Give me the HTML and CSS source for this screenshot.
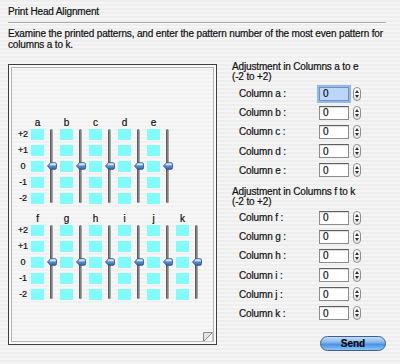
FILE: index.html
```html
<!DOCTYPE html>
<html lang="en">
<head>
    <meta charset="UTF-8">
    <title>Print Head Alignment</title>
    <link rel="stylesheet" href="styles.css">
</head>
<body>

<svg width="0" height="0" class="defs">
    <defs>
        <linearGradient id="thumb-fill" x1="0" y1="0" x2="0" y2="1">
            <stop offset="0" stop-color="#cfe3fb"/>
            <stop offset="0.45" stop-color="#5d93dc"/>
            <stop offset="1" stop-color="#2f64b8"/>
        </linearGradient>
        <symbol id="thumb" viewBox="0 0 10 8">
            <path d="M0.5 4 L3.5 0.7 H8 Q9.5 0.7 9.5 2.3 V5.7 Q9.5 7.3 8 7.3 H3.5 Z" fill="url(#thumb-fill)" stroke="#284c86" stroke-width="0.8"/>
            <path d="M3.8 1.6 H8 Q8.7 1.6 8.7 2.6 V3.2 H2.6 Z" fill="#eaf3ff" opacity="0.8"/>
        </symbol>
    </defs>
</svg>

<div class="dialog">
    <div class="title">Print Head Alignment</div>
    <div class="rule"></div>
    <p class="intro">Examine the printed patterns, and enter the pattern number of the most even pattern for<br>columns a to k.</p>

    <div class="main">
        <div class="sheet">
            <div class="group">
                <div class="levels">
                    <span>+2</span><span>+1</span><span>0</span><span>-1</span><span>-2</span>
                </div>
                <div class="col">
                    <div class="cells"><div class="letter">a</div><span class="sq"></span><span class="sq"></span><span class="sq"></span><span class="sq"></span><span class="sq"></span></div>
                    <div class="slider"><svg class="thumb"><use href="#thumb"/></svg></div>
                </div>
                <div class="col">
                    <div class="cells"><div class="letter">b</div><span class="sq"></span><span class="sq"></span><span class="sq"></span><span class="sq"></span><span class="sq"></span></div>
                    <div class="slider"><svg class="thumb"><use href="#thumb"/></svg></div>
                </div>
                <div class="col">
                    <div class="cells"><div class="letter">c</div><span class="sq"></span><span class="sq"></span><span class="sq"></span><span class="sq"></span><span class="sq"></span></div>
                    <div class="slider"><svg class="thumb"><use href="#thumb"/></svg></div>
                </div>
                <div class="col">
                    <div class="cells"><div class="letter">d</div><span class="sq"></span><span class="sq"></span><span class="sq"></span><span class="sq"></span><span class="sq"></span></div>
                    <div class="slider"><svg class="thumb"><use href="#thumb"/></svg></div>
                </div>
                <div class="col">
                    <div class="cells"><div class="letter">e</div><span class="sq"></span><span class="sq"></span><span class="sq"></span><span class="sq"></span><span class="sq"></span></div>
                    <div class="slider"><svg class="thumb"><use href="#thumb"/></svg></div>
                </div>
            </div>

            <div class="group">
                <div class="levels">
                    <span>+2</span><span>+1</span><span>0</span><span>-1</span><span>-2</span>
                </div>
                <div class="col">
                    <div class="cells"><div class="letter">f</div><span class="sq"></span><span class="sq"></span><span class="sq"></span><span class="sq"></span><span class="sq"></span></div>
                    <div class="slider"><svg class="thumb"><use href="#thumb"/></svg></div>
                </div>
                <div class="col">
                    <div class="cells"><div class="letter">g</div><span class="sq"></span><span class="sq"></span><span class="sq"></span><span class="sq"></span><span class="sq"></span></div>
                    <div class="slider"><svg class="thumb"><use href="#thumb"/></svg></div>
                </div>
                <div class="col">
                    <div class="cells"><div class="letter">h</div><span class="sq"></span><span class="sq"></span><span class="sq"></span><span class="sq"></span><span class="sq"></span></div>
                    <div class="slider"><svg class="thumb"><use href="#thumb"/></svg></div>
                </div>
                <div class="col">
                    <div class="cells"><div class="letter">i</div><span class="sq"></span><span class="sq"></span><span class="sq"></span><span class="sq"></span><span class="sq"></span></div>
                    <div class="slider"><svg class="thumb"><use href="#thumb"/></svg></div>
                </div>
                <div class="col">
                    <div class="cells"><div class="letter">j</div><span class="sq"></span><span class="sq"></span><span class="sq"></span><span class="sq"></span><span class="sq"></span></div>
                    <div class="slider"><svg class="thumb"><use href="#thumb"/></svg></div>
                </div>
                <div class="col">
                    <div class="cells"><div class="letter">k</div><span class="sq"></span><span class="sq"></span><span class="sq"></span><span class="sq"></span><span class="sq"></span></div>
                    <div class="slider"><svg class="thumb"><use href="#thumb"/></svg></div>
                </div>
            </div>

            <svg class="curl" width="10" height="10" viewBox="0 0 10 10">
                <path d="M0.5 0.5 H9.5 L0.5 9.5 Z" fill="#e4e4e4" stroke="#8a8a8a" stroke-width="1"/>
                <path d="M9.5 0.5 V9.5 H0.5" fill="none" stroke="#c8c8c8" stroke-width="1"/>
            </svg>
        </div>

        <div class="panel">
            <div class="heading">Adjustment in Columns a to e<br>(-2 to +2)</div>
            <div class="rows">
                <div class="row"><label for="col-a">Column a :</label><input id="col-a" class="field focus" value="0"><span class="stepper"></span></div>
                <div class="row"><label for="col-b">Column b :</label><input id="col-b" class="field" value="0"><span class="stepper"></span></div>
                <div class="row"><label for="col-c">Column c :</label><input id="col-c" class="field" value="0"><span class="stepper"></span></div>
                <div class="row"><label for="col-d">Column d :</label><input id="col-d" class="field" value="0"><span class="stepper"></span></div>
                <div class="row"><label for="col-e">Column e :</label><input id="col-e" class="field" value="0"><span class="stepper"></span></div>
            </div>

            <div class="heading second">Adjustment in Columns f to k<br>(-2 to +2)</div>
            <div class="rows">
                <div class="row"><label for="col-f">Column f :</label><input id="col-f" class="field" value="0"><span class="stepper"></span></div>
                <div class="row"><label for="col-g">Column g :</label><input id="col-g" class="field" value="0"><span class="stepper"></span></div>
                <div class="row"><label for="col-h">Column h :</label><input id="col-h" class="field" value="0"><span class="stepper"></span></div>
                <div class="row"><label for="col-i">Column i :</label><input id="col-i" class="field" value="0"><span class="stepper"></span></div>
                <div class="row"><label for="col-j">Column j :</label><input id="col-j" class="field" value="0"><span class="stepper"></span></div>
                <div class="row"><label for="col-k">Column k :</label><input id="col-k" class="field" value="0"><span class="stepper"></span></div>
            </div>

            <button class="send">Send</button>
        </div>
    </div>
</div>

</body>
</html>
```

FILE: styles.css
```css
html, body {
    margin: 0;
    height: 100%;
}
body {
    background: repeating-linear-gradient(#eeeeee 0 2px, #f5f5f5 2px 4px);
    font-family: "Liberation Sans", Arial, sans-serif;
    font-size: 10px;
    line-height: 11px;
    letter-spacing: -0.15px;
    color: #111;
    -webkit-text-stroke: 0.2px #111;
}
.defs {
    position: absolute;
}
.dialog {
    padding: 6px 14px 0 8px;
}
.title {
    height: 11px;
}
.rule {
    margin-top: 5px;
    height: 0;
    border-top: 1px solid #a9a9a9;
    border-bottom: 1px solid #fbfbfb;
}
.intro {
    margin: 4px 0 0;
    white-space: nowrap;
}
.main {
    display: flex;
    margin-top: 12px;
}

/* pattern sheet */
.sheet {
    position: relative;
    box-sizing: border-box;
    width: 209px;
    height: 281px;
    margin-top: 2px;
    padding: 55px 0 0 6px;
    border: 1px solid #3e3e3e;
    box-shadow: inset 0 0 0 2px #fafafa, inset 0 0 0 3px #b4b4b4;
    background: repeating-linear-gradient(#f1f1f1 0 2px, #f7f7f7 2px 4px);
}
.group {
    display: flex;
}
.group + .group {
    margin-top: 10px;
}
.levels {
    display: flex;
    flex-direction: column;
    width: 16px;
    padding-top: 6px;
    font-size: 9px;
}
.levels span {
    height: 16px;
    line-height: 16px;
    text-align: center;
}
.col {
    display: flex;
}
.cells {
    display: flex;
    flex-direction: column;
    gap: 5px;
    width: 13px;
}
.letter {
    height: 6px;
    margin-bottom: -2.5px;
    line-height: 6px;
    text-align: center;
}
.sq {
    display: block;
    width: 13px;
    height: 11px;
    background: #80fcfc;
}
.slider {
    position: relative;
    width: 16px;
    height: 74px;
    margin-top: 9px;
}
.slider::before {
    content: "";
    position: absolute;
    left: 6px;
    top: 0;
    bottom: 0;
    width: 3px;
    border-radius: 2px;
    background: linear-gradient(to right, #4e4e4e, #8a8a8a 60%, #b9b9b9);
}
.thumb {
    position: absolute;
    left: 3px;
    top: 33px;
    width: 10px;
    height: 8px;
}
.curl {
    position: absolute;
    right: 3px;
    bottom: 2px;
}

/* adjustment fields */
.panel {
    margin-left: 15px;
    width: 154px;
}
.heading {
    line-height: 10px;
}
.heading.second {
    margin-top: 7px;
}
.rows {
    margin-top: 2px;
}
.heading.second + .rows {
    margin-top: 1px;
}
.row {
    display: flex;
    align-items: center;
    height: 19.2px;
}
.row label {
    width: 87px;
    padding-left: 7px;
    box-sizing: border-box;
}
.field {
    box-sizing: border-box;
    width: 30px;
    height: 14px;
    margin: 0;
    padding: 0 3px;
    border: 1px solid #8c8c8c;
    border-top-color: #5f5f5f;
    box-shadow: inset 0 1px 1px rgba(0, 0, 0, 0.15);
    background: #fff;
    font: 10px "Liberation Sans", Arial, sans-serif;
    color: #111;
    outline: none;
}
.field.focus {
    background: #bdd6f6;
    border-color: #6d93cc;
    box-shadow: 0 0 0 2px #93b8ea;
}
.stepper {
    position: relative;
    box-sizing: border-box;
    width: 8px;
    height: 14px;
    margin-left: 4px;
    border: 1px solid #8e8e8e;
    border-radius: 4px;
    background: linear-gradient(#ffffff, #e6e6e6);
}
.stepper::before, .stepper::after {
    content: "";
    position: absolute;
    left: 1px;
    border-left: 2px solid transparent;
    border-right: 2px solid transparent;
}
.stepper::before {
    top: 2px;
    border-bottom: 3px solid #333;
}
.stepper::after {
    bottom: 2px;
    border-top: 3px solid #333;
}
.send {
    display: block;
    width: 66px;
    height: 15px;
    margin: 13px 0 0 88px;
    padding: 0;
    border: 1px solid #3d5f97;
    border-radius: 8px;
    background: linear-gradient(#c4ddf7 0%, #7fb3ec 45%, #4b90e0 55%, #86c6fb 100%);
    font: bold 10px "Liberation Sans", Arial, sans-serif;
    color: #000;
    cursor: pointer;
}
```
